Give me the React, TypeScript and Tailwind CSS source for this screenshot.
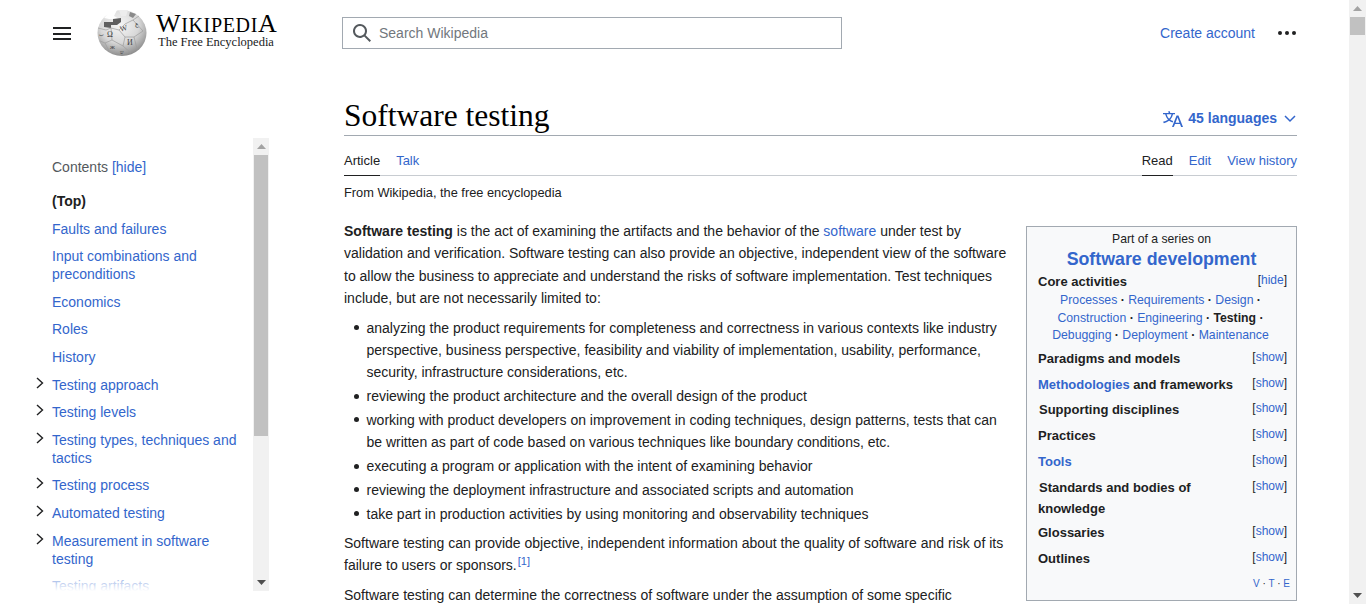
import type { ReactNode } from 'react';

const tocItems = [
  { label: 'Faults and failures' },
  { label: 'Input combinations and preconditions' },
  { label: 'Economics' },
  { label: 'Roles' },
  { label: 'History' },
  { label: 'Testing approach', more: true },
  { label: 'Testing levels', more: true },
  { label: 'Testing types, techniques and tactics', more: true },
  { label: 'Testing process', more: true },
  { label: 'Automated testing', more: true },
  { label: 'Measurement in software testing', more: true },
  { label: 'Testing artifacts' },
];

const bullets = [
  'analyzing the product requirements for completeness and correctness in various contexts like industry perspective, business perspective, feasibility and viability of implementation, usability, performance, security, infrastructure considerations, etc.',
  'reviewing the product architecture and the overall design of the product',
  'working with product developers on improvement in coding techniques, design patterns, tests that can be written as part of code based on various techniques like boundary conditions, etc.',
  'executing a program or application with the intent of examining behavior',
  'reviewing the deployment infrastructure and associated scripts and automation',
  'take part in production activities by using monitoring and observability techniques',
];

function Link({ children, className = '' }: { children: ReactNode; className?: string }) {
  return <a className={`text-[#3366cc] ${className}`}>{children}</a>;
}

function Globe() {
  return (
    <svg width="50" height="46" viewBox="0 0 50 46" className="shrink-0">
      <defs>
        <radialGradient id="sphere" cx="45%" cy="32%" r="72%">
          <stop offset="0%" stopColor="#f6f6f6" />
          <stop offset="55%" stopColor="#d8d8d8" />
          <stop offset="100%" stopColor="#828282" />
        </radialGradient>
      </defs>
      <ellipse cx="25" cy="23" rx="24.5" ry="23" fill="url(#sphere)" />
      <path d="M7 8 L13 1 L20 0 L17 6 L22 9 L12 9 Z" fill="#ffffff" />
      <path d="M22 0 L31 0 L29 6 L24 6 Z" fill="#ededed" />
      <path d="M7 12 L16 12 L16 9 L24 8 L24 12 L20 15 L14 15 L14 18 L7 17 Z" fill="#5f5f5f" />
      <path d="M33 2 L39 4 L36 8 L32 6 Z" fill="#8a8a8a" />
      <path
        d="M1 18 L9 20 L14 18 L22 20 L28 14 L36 10 L42 6 M14 18 L15 30 L8 33 L3 31 M22 20 L28 27 L26 36 L15 30 M28 27 L37 27 L46 21 L36 10 M37 27 L40 39 M26 36 L34 43 M8 33 L12 41"
        fill="none"
        stroke="#9c9c9c"
        strokeWidth="0.7"
      />
      <g fill="#3f3f3f" fontFamily="'Liberation Serif', serif">
        <text x="23" y="21" fontSize="8" transform="rotate(-14 26 19)">W</text>
        <text x="10" y="27" fontSize="8">Ω</text>
        <text x="30" y="35" fontSize="8">И</text>
        <text x="13" y="39" fontSize="7">ж</text>
        <text x="38" y="16" fontSize="6">ع</text>
        <text x="2" y="26" fontSize="5">ب</text>
        <text x="23" y="44" fontSize="5">ש</text>
      </g>
    </svg>
  );
}

function ArrowUp({ color }: { color: string }) {
  return (
    <svg width="9" height="5" viewBox="0 0 9 5">
      <path d="M4.5 0 L9 5 L0 5 Z" fill={color} />
    </svg>
  );
}

function ArrowDown({ color }: { color: string }) {
  return (
    <svg width="9" height="5" viewBox="0 0 9 5">
      <path d="M0 0 L9 0 L4.5 5 Z" fill={color} />
    </svg>
  );
}

function Sidebar() {
  return (
    <aside className="relative mt-[72px] ml-[-20px] flex h-[453px] w-[237px] shrink-0">
      <div className="w-[221px] overflow-hidden pt-[20px] pl-[20px] text-[14px] leading-[18px]">
        <div className="text-[#54595d]">
          Contents <Link className="text-[14px]">[hide]</Link>
        </div>
        <div className="mt-[16px] font-bold text-[#202122]">(Top)</div>
        <ul className="mt-[9.65px] flex flex-col gap-[9.6px]">
          {tocItems.map((item) => (
            <li key={item.label} className="relative">
              {item.more && (
                <svg
                  width="8"
                  height="12"
                  viewBox="0 0 8 12"
                  className="absolute top-[1px] left-[-16px]"
                >
                  <path d="M1 1 L6.5 6 L1 11" fill="none" stroke="#202122" strokeWidth="1.4" />
                </svg>
              )}
              <Link>{item.label}</Link>
            </li>
          ))}
        </ul>
      </div>
      <div className="flex w-[16px] flex-col items-center bg-[#f1f1f1]">
        <div className="flex h-[17px] w-full items-center justify-center">
          <ArrowUp color="#a3a3a3" />
        </div>
        <div className="h-[281px] w-[14px] bg-[#c1c1c1]" />
        <div className="flex-1" />
        <div className="flex h-[17px] w-full items-center justify-center">
          <ArrowDown color="#505050" />
        </div>
      </div>
      <div className="absolute bottom-0 left-0 h-[26px] w-[221px] bg-gradient-to-b from-white/0 to-white" />
    </aside>
  );
}

function NavRow({ title, action = 'show', className = '' }: { title: ReactNode; action?: string; className?: string }) {
  return (
    <div className={`flex items-start justify-between ${className}`}>
      <div className="w-[202px] text-[13px] leading-[21px] font-bold text-[#202122]">{title}</div>
      <div className="pt-[1px] text-[12px] leading-[16px] text-[#202122]">
        [<Link>{action}</Link>]
      </div>
    </div>
  );
}

function Dot() {
  return <span className="font-bold text-[#202122]"> · </span>;
}

function Infobox() {
  return (
    <div className="float-right mt-[6px] ml-[18px] h-[375px] w-[271px] border border-[#a2a9b1] bg-[#f8f9fa] pt-[4px] pr-[9px] pl-[11px]">
      <div className="pr-[2px] text-center text-[12.2px] leading-[17px] text-[#202122]">Part of a series on</div>
      <div className="pr-[2px] text-center text-[17.8px] leading-[23px] font-bold text-[#3366cc]">Software development</div>
      <NavRow title="Core activities" action="hide" />
      <div className="pr-[4px] text-center text-[12.25px] leading-[17.6px]">
        <Link>Processes</Link>
        <Dot />
        <Link>Requirements</Link>
        <Dot />
        <Link>Design</Link>
        <Dot />
        <br />
        <Link>Construction</Link>
        <Dot />
        <Link>Engineering</Link>
        <Dot />
        <b className="text-[#202122]">Testing</b>
        <Dot />
        <br />
        <Link>Debugging</Link>
        <Dot />
        <Link>Deployment</Link>
        <Dot />
        <Link>Maintenance</Link>
      </div>
      <div className="mt-[3.3px] flex flex-col gap-[4.7px]">
        <NavRow title="Paradigms and models" />
        <NavRow title={<><Link>Methodologies</Link> and frameworks</>} />
        <NavRow title={<span className="ml-[1px]">Supporting disciplines</span>} />
        <NavRow title="Practices" />
        <NavRow title={<Link>Tools</Link>} />
        <NavRow
          title={<><span className="ml-[1px]">Standards and bodies of</span> knowledge</>}
          className="mb-[-0.8px]"
        />
        <NavRow title="Glossaries" />
        <NavRow title="Outlines" />
      </div>
      <div className="mt-[8px] mr-[-3px] text-right text-[10px] leading-[14px] text-[#202122]">
        <Link>V</Link> · <Link>T</Link> · <Link>E</Link>
      </div>
    </div>
  );
}

function Article() {
  return (
    <main className="w-[953px] shrink-0 text-[14px] text-[#202122]">
      <div className="mt-[26px] flex h-[44px] items-end justify-between border-b border-[#a2a9b1]">
        <h1
          className="mb-[-3px] text-[31.5px] leading-[44px] text-[#000000]"
          style={{ fontFamily: "'Liberation Serif', serif" }}
        >
          Software testing
        </h1>
        <div className="flex items-center pb-[6px] font-bold text-[#3366cc]">
          <svg width="20" height="20" viewBox="0 0 20 20" fill="#3366cc" className="mr-[5px]">
            <path d="M20 18h-1.44a.6.6 0 0 1-.4-.12.8.8 0 0 1-.23-.31L17 15h-5l-1 2.54a.8.8 0 0 1-.22.3.6.6 0 0 1-.4.14H9l4.55-11.47h1.89zm-3.53-4.31L14.89 9.5a12 12 0 0 1-.39-1.24q-.09.37-.19.69l-.19.56-1.58 4.19zm-6.3-1.58a13.4 13.4 0 0 1-2.91-1.41 11.46 11.46 0 0 0 2.81-5.37H12V4H7.31a4 4 0 0 0-.2-.56C6.87 2.79 6.6 2 6.6 2l-1.47.5s.4.89.6 1.5H0v1.33h2.15A11.23 11.23 0 0 0 5 10.7a17.2 17.2 0 0 1-5 2.1q.56.82.87 1.38a23.3 23.3 0 0 0 5.22-2.51 15.6 15.6 0 0 0 3.56 1.77zM3.63 5.33h4.91a8.1 8.1 0 0 1-2.45 4.45 9.1 9.1 0 0 1-2.46-4.45" />
          </svg>
          45 languages
          <svg width="12" height="8" viewBox="0 0 12 8" className="mr-[1px] ml-[7px]">
            <path d="M1 1 L6 6 L11 1" fill="none" stroke="#3366cc" strokeWidth="1.5" />
          </svg>
        </div>
      </div>
      <div className="flex h-[40px] justify-between border-b border-[#c8ccd1] text-[13px] leading-[18px]">
        <div className="flex gap-[16px]">
          <span className="h-[40px] border-b border-[#202122] pt-[16px]">Article</span>
          <Link className="pt-[16px]">Talk</Link>
        </div>
        <div className="flex gap-[16px]">
          <span className="h-[40px] border-b border-[#202122] pt-[16px]">Read</span>
          <Link className="pt-[16px]">Edit</Link>
          <Link className="pt-[16px]">View history</Link>
        </div>
      </div>
      <div className="mt-[8px] text-[12.8px] leading-[18px]">From Wikipedia, the free encyclopedia</div>
      <div className="mt-[18px] leading-[22.4px]">
        <Infobox />
        <p>
          <b>Software testing</b> is the act of examining the artifacts and the behavior of the{' '}
          <Link>software</Link> under test by validation and verification. Software testing can also provide an
          objective, independent view of the software to allow the business to appreciate and understand the risks of
          software implementation. Test techniques include, but are not necessarily limited to:
        </p>
        <ul className="mt-[7px] ml-[22.5px]">
          {bullets.map((text) => (
            <li key={text} className="relative mb-[1.35px]">
              <span className="absolute top-[8.5px] left-[-12.5px] size-[5px] rounded-full bg-[#202122]" />
              {text}
            </li>
          ))}
        </ul>
        <p className="mt-[7px]">
          Software testing can provide objective, independent information about the quality of software and risk of its
          failure to users or sponsors.
          <span className="relative top-[-5px] ml-[1px] text-[11px] leading-none">
            <Link>[1]</Link>
          </span>
        </p>
        <p className="mt-[7.3px]">Software testing can determine the correctness of software under the assumption of some specific</p>
      </div>
    </main>
  );
}

export default function App() {
  return (
    <div
      className="flex h-[604px] w-full overflow-hidden bg-white"
      style={{ fontFamily: "'Liberation Sans', Arial, sans-serif" }}
    >
      <div className="w-[1349px] shrink-0 overflow-hidden">
        <header className="flex h-[66px] items-start pr-[53px] pl-[53px]">
          <div className="mt-[27px] flex h-[13px] w-[18px] flex-col justify-between">
            <span className="h-[2px] bg-[#202122]" />
            <span className="h-[2px] bg-[#202122]" />
            <span className="h-[2px] bg-[#202122]" />
          </div>
          <div className="mt-[10px] ml-[26px] flex w-[245px] items-start">
            <Globe />
            <div className="ml-[9px] text-[#000000]" style={{ fontFamily: "'Liberation Serif', serif" }}>
              <div className="mt-[1px] text-[26px] leading-[26px] tracking-[0.65px]">
                W<span className="text-[20px]">IKIPEDI</span>A
              </div>
              <div className="mt-[-3px] ml-[2px] text-[12.5px] leading-[14px] text-[#202122]">The Free Encyclopedia</div>
            </div>
          </div>
          <div className="mt-[17px] flex h-[32px] w-[500px] items-center border border-[#a2a9b1] bg-white pl-[9px]">
            <svg width="20" height="20" viewBox="0 0 20 20" fill="#54595d" className="mr-[7px]">
              <path d="M12.2 13.6a7 7 0 1 1 1.4-1.4l5.4 5.4-1.4 1.4zM3 8a5 5 0 1 0 10 0A5 5 0 0 0 3 8" />
            </svg>
            <span className="text-[14px] text-[#72777d]">Search Wikipedia</span>
          </div>
          <div className="mt-[25px] ml-auto flex items-center">
            <Link className="text-[14px] leading-[16px]">Create account</Link>
            <div className="ml-[22.5px] flex gap-[2.5px]">
              <span className="size-[4.5px] rounded-full bg-[#202122]" />
              <span className="size-[4.5px] rounded-full bg-[#202122]" />
              <span className="size-[4.5px] rounded-full bg-[#202122]" />
            </div>
          </div>
        </header>
        <div className="flex gap-[75px] pl-[52px]">
          <Sidebar />
          <Article />
        </div>
      </div>
      <div className="flex w-[17px] flex-col bg-[#f1f1f1]">
        <div className="flex h-[17px] items-center justify-center">
          <ArrowUp color="#a3a3a3" />
        </div>
        <div className="mx-auto h-[18px] w-[15px] bg-[#c1c1c1]" />
        <div className="flex-1" />
        <div className="flex h-[17px] items-center justify-center">
          <ArrowDown color="#505050" />
        </div>
      </div>
    </div>
  );
}
